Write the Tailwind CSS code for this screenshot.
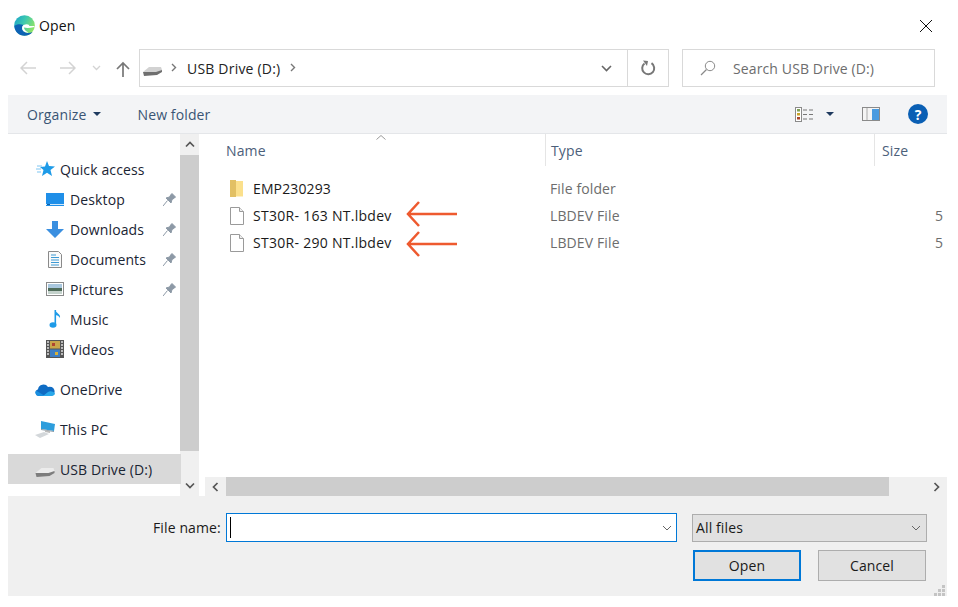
<!DOCTYPE html>
<html><head><meta charset="utf-8"><title>Open</title>
<script src="https://cdn.jsdelivr.net/npm/@tailwindcss/browser@4"></script></head>
<body class="bg-white">
<div class="relative w-[958px] h-[607px] overflow-hidden bg-white flex flex-col font-['Open_Sans',sans-serif] text-[14px] tracking-[0.12px] text-[#1a1a1a]">
  <!-- title -->
  <div class="h-[49px] flex items-center pl-[14px] pr-[25px] pt-[2px]">
    <svg class="w-[21px] h-[21px]" viewBox="0 0 21 21"><defs><linearGradient id="eg" x1="0" y1="0" x2="1" y2="0.500"><stop offset="0" stop-color="#18a0cc"/><stop offset=".5" stop-color="#3cc8b0"/><stop offset="1" stop-color="#8ee468"/></linearGradient></defs><circle cx="10.500" cy="10.500" r="10.300" fill="url(#eg)"/><path d="M.3 11C.8 16.800 5 20.800 10.500 20.800c3.200 0 6-1.300 8-3.800-3.500 1.500-7 1.200-9-.7C7.500 14.300 7.500 11.500 9.500 10 6.500 8.800 2.500 9 .3 11z" fill="#0d62b4"/><path d="M9.500 10c-2 1.500-2 4.300 0 6.300 1.500 1.200 3.300 1.500 5 1.300-2.500-1-4.300-3-4.600-5 2.800.6 6.600.4 10.400-.6v-1c-2 .2-4 .1-5 0 .2-1.800-2.800-2.600-5.800-1z" fill="#fff"/></svg>
    <span class="ml-[4px] text-[#111]">Open</span>
    <svg class="ml-auto w-[14px] h-[14px]" viewBox="0 0 14 14"><path d="M1 1l12 12M13 1L1 13" stroke="#111" stroke-width="1" fill="none"/></svg>
  </div>
  <!-- address -->
  <div class="h-[38px] flex items-center">
    <div class="w-[139px] flex items-center shrink-0">
      <svg class="ml-[20px] w-[17px] h-[14px]" viewBox="0 0 17 14"><path d="M1 7h15M7 1L1 7l6 6" stroke="#d3d3d3" stroke-width="1.500" fill="none"/></svg>
      <svg class="ml-[22px] w-[17px] h-[14px]" viewBox="0 0 17 14"><path d="M16 7H1M10 1l6 6-6 6" stroke="#d3d3d3" stroke-width="1.500" fill="none"/></svg>
      <svg class="ml-[16px] w-[9px] h-[6px]" viewBox="0 0 9 6"><path d="M1 1l3.500 3.500L8 1" stroke="#d3d3d3" stroke-width="1.300" fill="none"/></svg>
      <svg class="ml-[15px] w-[14px] h-[16px] mt-[1px]" viewBox="0 0 14 16"><path d="M7 16V2M1 8l6-6 6 6" stroke="#777" stroke-width="1.700" fill="none"/></svg>
    </div>
    <div class="w-[530px] h-[38px] border border-[#d9d9d9] flex items-center shrink-0">
      <svg class="ml-[3px] w-[19px] h-[12px] mt-[6px]" viewBox="0 0 19 12"><path d="M0 7l6-5 12 0 1 3-5 3z" fill="#d2d2d2"/><path d="M0 7l13 0 6-2v2l-5 3-13 1z" fill="#6f6f6f"/></svg>
      <svg class="ml-[9px] w-[6px] h-[9px] -mt-[1px]" viewBox="0 0 6 9"><path d="M1 1l3.500 3.500L1 8" stroke="#777" stroke-width="1.400" fill="none"/></svg>
      <span class="ml-[10px] text-[#222] tracking-[0.2px]">USB Drive (D:)</span>
      <svg class="ml-[10px] w-[6px] h-[9px] -mt-[1px]" viewBox="0 0 6 9"><path d="M1 1l3.500 3.500L1 8" stroke="#777" stroke-width="1.400" fill="none"/></svg>
      <svg class="ml-auto mr-[15px] w-[11px] h-[7px]" viewBox="0 0 11 7"><path d="M1 1l4.500 4.500L10 1" stroke="#666" stroke-width="1.600" fill="none"/></svg>
      <div class="w-[41px] h-full border-l border-[#d9d9d9] flex items-center justify-center pl-[1px]">
        <svg class="w-[15px] h-[16px]" viewBox="0 0 15 16"><path d="M10.500 3.200A6 6 0 1 1 3.500 3.500" stroke="#777" stroke-width="2" fill="none"/><path d="M2 0.500l5 .5-1 5z" fill="#777"/></svg>
      </div>
    </div>
    <div class="ml-[13px] w-[253px] h-[38px] border border-[#d9d9d9] flex items-center">
      <svg class="ml-[17px] w-[16px] h-[16px]" viewBox="0 0 16 16"><circle cx="10" cy="6" r="4.700" stroke="#8a8a8a" fill="none"/><path d="M6.500 9.500L1 15" stroke="#8a8a8a" stroke-width="1.200"/></svg>
      <span class="ml-[17px] text-[#6d6d6d]">Search USB Drive (D:)</span>
    </div>
  </div>
  <!-- toolbar -->
  <div class="mt-[8px] ml-[8px] w-[939px] h-[39px] bg-[#f3f4f6] border-b border-[#e4e6e9] flex items-center text-[#3a5474]">
    <span class="ml-[19px]">Organize</span>
    <span class="ml-[6px] w-0 h-0 border-x-[4px] border-x-transparent border-t-[4px] border-t-[#1f3a5f]"></span>
    <span class="ml-[37px]">New folder</span>
    <svg class="ml-auto w-[19px] h-[15px]" viewBox="0 0 19 15"><rect x=".5" y=".5" width="6" height="14" fill="#fff" stroke="#8a8a8a"/><rect x="2" y="2" width="3" height="2.500" fill="#7f9f56"/><rect x="2" y="6" width="3" height="2.500" fill="#c9a227"/><rect x="2" y="10" width="3" height="2.500" fill="#a8452a"/><path d="M8 3h4M14 3h4M8 7.500h4M14 7.500h4M8 12h4M14 12h4" stroke="#777"/></svg>
    <span class="ml-[12px] w-0 h-0 border-x-[4px] border-x-transparent border-t-[4px] border-t-[#1f3a5f]"></span>
    <svg class="ml-[28px] w-[18px] h-[14px]" viewBox="0 0 18 14"><rect x=".5" y=".5" width="17" height="13" fill="#f4f4f4" stroke="#8a8a8a"/><rect x="10" y="2" width="7" height="11" fill="#4a9be0"/><path d="M5 1v12" stroke="#aaa"/></svg>
    <div class="ml-[28px] mr-[19px] w-[20px] h-[20px] rounded-full bg-[#0a5fb4] flex items-center justify-center text-white text-[14px] font-bold tracking-normal">?</div>
  </div>
  <!-- main -->
  <div class="ml-[8px] w-[939px] h-[362px] flex">
    <div class="w-[172px] flex flex-col text-[#1a2433] pt-[20px] relative">
      <div class="h-[30px] flex items-center pl-[28px] gap-[5px]"><svg class="w-[19px] h-[16px] shrink-0" viewBox="0 0 19 16"><path d="M11 0l2 5 6 .5-4.500 3.500 1.500 6-5-3.300-5 3.300 1.500-6L4 6l5-.5z" fill="#1e9be8"/><path d="M1 5h5M0 8h5M1 11h4" stroke="#7cc5f2"/></svg><span>Quick access</span></div>
      <div class="h-[30px] flex items-center pl-[38px] gap-[6px]"><svg class="w-[18px] h-[13px] shrink-0" viewBox="0 0 18 13"><rect width="18" height="13" fill="#1f8fe8"/><rect y="11" width="18" height="1" fill="#cfe8fb"/><rect x="1" y="11" width="3" height="1" fill="#0a5fa8"/></svg><span>Desktop</span><svg class="ml-auto mr-[4px] w-[13px] h-[13px]" viewBox="0 0 13 13"><path d="M0 13l4.500-5.500M3 5l5 5 1-3.500 2.500-1.500 1-1L9 .5 8 1.500 6.500 4z" fill="#8d99a6" stroke="#8d99a6" stroke-linejoin="round"/></svg></div>
      <div class="h-[30px] flex items-center pl-[38px] gap-[6px]"><svg class="w-[18px] h-[17px] shrink-0" viewBox="0 0 18 17"><path d="M6 0h6v8h6l-9 9-9-9h6z" fill="#3a8fe0"/></svg><span>Downloads</span><svg class="ml-auto mr-[4px] w-[13px] h-[13px]" viewBox="0 0 13 13"><path d="M0 13l4.500-5.500M3 5l5 5 1-3.500 2.500-1.500 1-1L9 .5 8 1.500 6.500 4z" fill="#8d99a6" stroke="#8d99a6" stroke-linejoin="round"/></svg></div>
      <div class="h-[30px] flex items-center pl-[40px] gap-[8px]"><svg class="w-[14px] h-[17px] shrink-0" viewBox="0 0 14 17"><path d="M.5.500h10l3 3v13H.5z" fill="#fafafa" stroke="#8a8a8a"/><path d="M3 4h5M3 6.500h8M3 9h8M3 11.500h8M3 14h8" stroke="#3c9ad4"/></svg><span>Documents</span><svg class="ml-auto mr-[4px] w-[13px] h-[13px]" viewBox="0 0 13 13"><path d="M0 13l4.500-5.500M3 5l5 5 1-3.500 2.500-1.500 1-1L9 .5 8 1.500 6.500 4z" fill="#8d99a6" stroke="#8d99a6" stroke-linejoin="round"/></svg></div>
      <div class="h-[30px] flex items-center pl-[38px] gap-[6px]"><svg class="w-[18px] h-[14px] shrink-0" viewBox="0 0 18 14"><rect x=".5" y=".5" width="17" height="13" fill="#fff" stroke="#8a8a8a"/><rect x="2" y="2" width="14" height="4" fill="#a9c7de"/><rect x="2" y="6" width="14" height="3" fill="#4f6c5a"/><rect x="2" y="9" width="14" height="3" fill="#c4d2cc"/></svg><span>Pictures</span><svg class="ml-auto mr-[4px] w-[13px] h-[13px]" viewBox="0 0 13 13"><path d="M0 13l4.500-5.500M3 5l5 5 1-3.500 2.500-1.500 1-1L9 .5 8 1.500 6.500 4z" fill="#8d99a6" stroke="#8d99a6" stroke-linejoin="round"/></svg></div>
      <div class="h-[30px] flex items-center pl-[41px] gap-[9px]"><svg class="w-[12px] h-[18px] shrink-0" viewBox="0 0 12 18"><ellipse cx="4" cy="15" rx="3.500" ry="2.800" fill="#1e9be8"/><path d="M5.500 0h1.600v15H5.500z" fill="#1e9be8"/><path d="M6 0c1 3 6 4 5 8-1-2-3-3-5-3z" fill="#1e9be8"/></svg><span>Music</span></div>
      <div class="h-[30px] flex items-center pl-[38px] gap-[6px]"><svg class="w-[18px] h-[18px] shrink-0" viewBox="0 0 18 18"><rect width="18" height="18" fill="#555"/><rect x="4" y="1" width="10" height="7.500" fill="#c9a54a"/><rect x="6" y="3" width="3" height="3" fill="#b0432f"/><rect x="4" y="9.500" width="10" height="7.500" fill="#3f7fc4"/><rect x="9" y="12" width="3" height="3" fill="#d9b23a"/><path d="M1 2h2M1 5h2M1 8h2M1 11h2M1 14h2M15 2h2M15 5h2M15 8h2M15 11h2M15 14h2" stroke="#ddd" stroke-width="1.500"/></svg><span>Videos</span></div>
      <div class="h-[30px] mt-[10px] flex items-center pl-[27px] gap-[5px]"><svg class="w-[20px] h-[13px] shrink-0" viewBox="0 0 20 13"><path d="M3.500 13A3.500 3.500 0 0 1 3 6.200 5.500 5.500 0 0 1 13 4a4.500 4.500 0 0 1 3.500 9z" fill="#0f6cc4"/><path d="M3.500 13A3.500 3.500 0 0 1 1 7.500l9 5.500z" fill="#1a8fe0"/><path d="M8 13l5-4c2-1.500 5-1 7 1.500-.3 1.500-1.500 2.500-3.500 2.500z" fill="#29a8ea"/></svg><span>OneDrive</span></div>
      <div class="h-[30px] mt-[10px] flex items-center pl-[27px] gap-[5px]"><svg class="w-[20px] h-[17px] shrink-0" viewBox="0 0 20 17"><path d="M6 0l14 3-1 7-13-2z" fill="#2d9ddc"/><path d="M6 8l13 2v1L6 9z" fill="#8a9aa6"/><path d="M10 9l5 1v2l-5-1z" fill="#bbb"/><path d="M0 14l9-3 5 2-9 4z" fill="#d3d7da"/></svg><span>This PC</span></div>
      <div class="h-[30px] mt-[10px] flex items-center pl-[27px] gap-[5px] bg-[#d9d9d9] -mr-[1px]"><svg class="w-[20px] h-[12px] mt-[6px] shrink-0" viewBox="0 0 19 12"><path d="M0 7l6-5 12 0 1 3-5 3z" fill="#ececec"/><path d="M0 7l13 0 6-2v2l-5 3-13 1z" fill="#7d7d7d"/></svg><span>USB Drive (D:)</span></div>
    </div>
    <!-- vertical scrollbar -->
    <div class="w-[19px] bg-[#f0f0f0] flex flex-col">
      <div class="h-[21px] flex items-center justify-center"><svg class="w-[10px] h-[7px]" viewBox="0 0 10 7"><path d="M1 5.500l4-4 4 4" stroke="#555" stroke-width="1.700" fill="none"/></svg></div>
      <div class="h-[296px] bg-[#cdcdcd]"></div>
      <div class="flex-1 flex items-end justify-center pb-[7px]"><svg class="w-[10px] h-[7px]" viewBox="0 0 10 7"><path d="M1 1.500l4 4 4-4" stroke="#555" stroke-width="1.700" fill="none"/></svg></div>
    </div>
    <div class="w-[6px]"></div>
    <!-- list -->
    <div class="flex-1 flex flex-col min-w-0">
      <div class="flex-1 relative">
        <div class="h-[32px] flex items-center text-[#4c607a] relative">
          <span class="w-[340px] pl-[21px] h-full flex items-center">Name</span>
          <span class="w-[329px] pl-[5px] h-full flex items-center border-l border-[#e5e5e5]">Type</span>
          <span class="flex-1 pl-[7px] h-full flex items-center border-l border-[#e5e5e5]">Size</span>
          <svg class="absolute left-[171px] top-[1px] w-[10px] h-[5px]" viewBox="0 0 10 5"><path d="M.5 4.500L5 .5l4.500 4" stroke="#9a9a9a" fill="none"/></svg>
        </div>
        <div class="mt-[9px] h-[27px] flex items-center text-[#1a1a1a]">
          <svg class="ml-[24px] w-[15px] h-[17px] shrink-0" viewBox="0 0 15 17"><path d="M1 0h6v17H1z" fill="#e2c064"/><path d="M7 1h7v15.500H7z" fill="#fbe08c"/></svg>
          <span class="ml-[9px] w-[297px]">EMP230293</span><span class="text-[#6d6d6d]">File folder</span>
        </div>
        <div class="h-[27px] flex items-center text-[#1a1a1a]">
          <svg class="ml-[25px] w-[14px] h-[18px] shrink-0" viewBox="0 0 14 18"><path d="M.5.500h9l4 4v13H.5z" fill="#fff" stroke="#9a9a9a"/><path d="M9.500.500v4h4" fill="#eee" stroke="#9a9a9a"/></svg>
          <span class="ml-[9px] w-[297px] tracking-[0.28px]">ST30R- 163 NT.lbdev</span><span class="text-[#6d6d6d]">LBDEV File</span><span class="absolute right-[4px] text-[#6d6d6d]">5</span>
        </div>
        <div class="h-[27px] flex items-center text-[#1a1a1a]">
          <svg class="ml-[25px] w-[14px] h-[18px] shrink-0" viewBox="0 0 14 18"><path d="M.5.500h9l4 4v13H.5z" fill="#fff" stroke="#9a9a9a"/><path d="M9.500.500v4h4" fill="#eee" stroke="#9a9a9a"/></svg>
          <span class="ml-[9px] w-[297px] tracking-[0.28px]">ST30R- 290 NT.lbdev</span><span class="text-[#6d6d6d]">LBDEV File</span><span class="absolute right-[4px] text-[#6d6d6d]">5</span>
        </div>
      </div>
      <div class="h-[19px] bg-[#f0f0f0] flex items-center">
        <div class="w-[21px] flex justify-center"><svg class="w-[7px] h-[10px]" viewBox="0 0 7 10"><path d="M5.500 1l-4 4 4 4" stroke="#555" stroke-width="1.700" fill="none"/></svg></div>
        <div class="w-[663px] h-full bg-[#cdcdcd]"></div>
        <div class="ml-auto w-[21px] flex justify-center"><svg class="w-[7px] h-[10px]" viewBox="0 0 7 10"><path d="M1.500 1l4 4-4 4" stroke="#555" stroke-width="1.700" fill="none"/></svg></div>
      </div>
    </div>
  </div>
  <!-- footer -->
  <div class="ml-[8px] w-[939px] h-[100px] bg-[#f0f0f0] relative flex flex-col">
    <div class="mt-[17px] h-[29px] flex items-center">
      <span class="ml-[145px] w-[73px] text-[#1a1a1a]">File name:</span>
      <div class="w-[451px] h-[29px] border border-[#0078d7] bg-white flex items-center">
        <span class="ml-[3px] w-px h-[21px] bg-black"></span>
        <svg class="ml-auto mr-[4px] w-[10px] h-[6px]" viewBox="0 0 10 6"><path d="M1 1l4 4 4-4" stroke="#666" fill="none"/></svg>
      </div>
      <div class="ml-[15px] w-[235px] h-[28px] border border-[#adadad] bg-[#e1e1e1] flex items-center pl-[3px] text-[#1a1a1a]">All files
        <svg class="ml-auto mr-[5px] w-[10px] h-[6px]" viewBox="0 0 10 6"><path d="M1 1l4 4 4-4" stroke="#666" fill="none"/></svg>
      </div>
    </div>
    <div class="mt-[8px] flex">
      <div class="ml-[685px] w-[108px] h-[31px] border-2 border-[#0078d7] bg-[#e1e1e1] flex items-center justify-center text-[#1a1a1a]">Open</div>
      <div class="ml-[17px] w-[108px] h-[31px] border border-[#adadad] bg-[#e1e1e1] flex items-center justify-center text-[#1a1a1a]">Cancel</div>
    </div>
    <svg class="absolute right-[2px] bottom-0 w-[11px] h-[11px]" viewBox="0 0 11 11"><path d="M8 0h3v3H8zM4 4h3v3H4zM8 4h3v3H8zM0 8h3v3H0zM4 8h3v3H4zM8 8h3v3H8z" fill="#c4c4c4"/></svg>
  </div>
  <!-- annotation arrows -->
  <svg class="absolute left-[404px] top-[198px] w-[56px] h-[62px]" viewBox="0 0 56 62"><g stroke="#ee5a2f" stroke-width="2.500" fill="none"><path d="M4 16h49M15 4L4 16l11 12"/><path d="M4 46h49M15 34L4 46l11 12"/></g></svg>
</div>
</body></html>
